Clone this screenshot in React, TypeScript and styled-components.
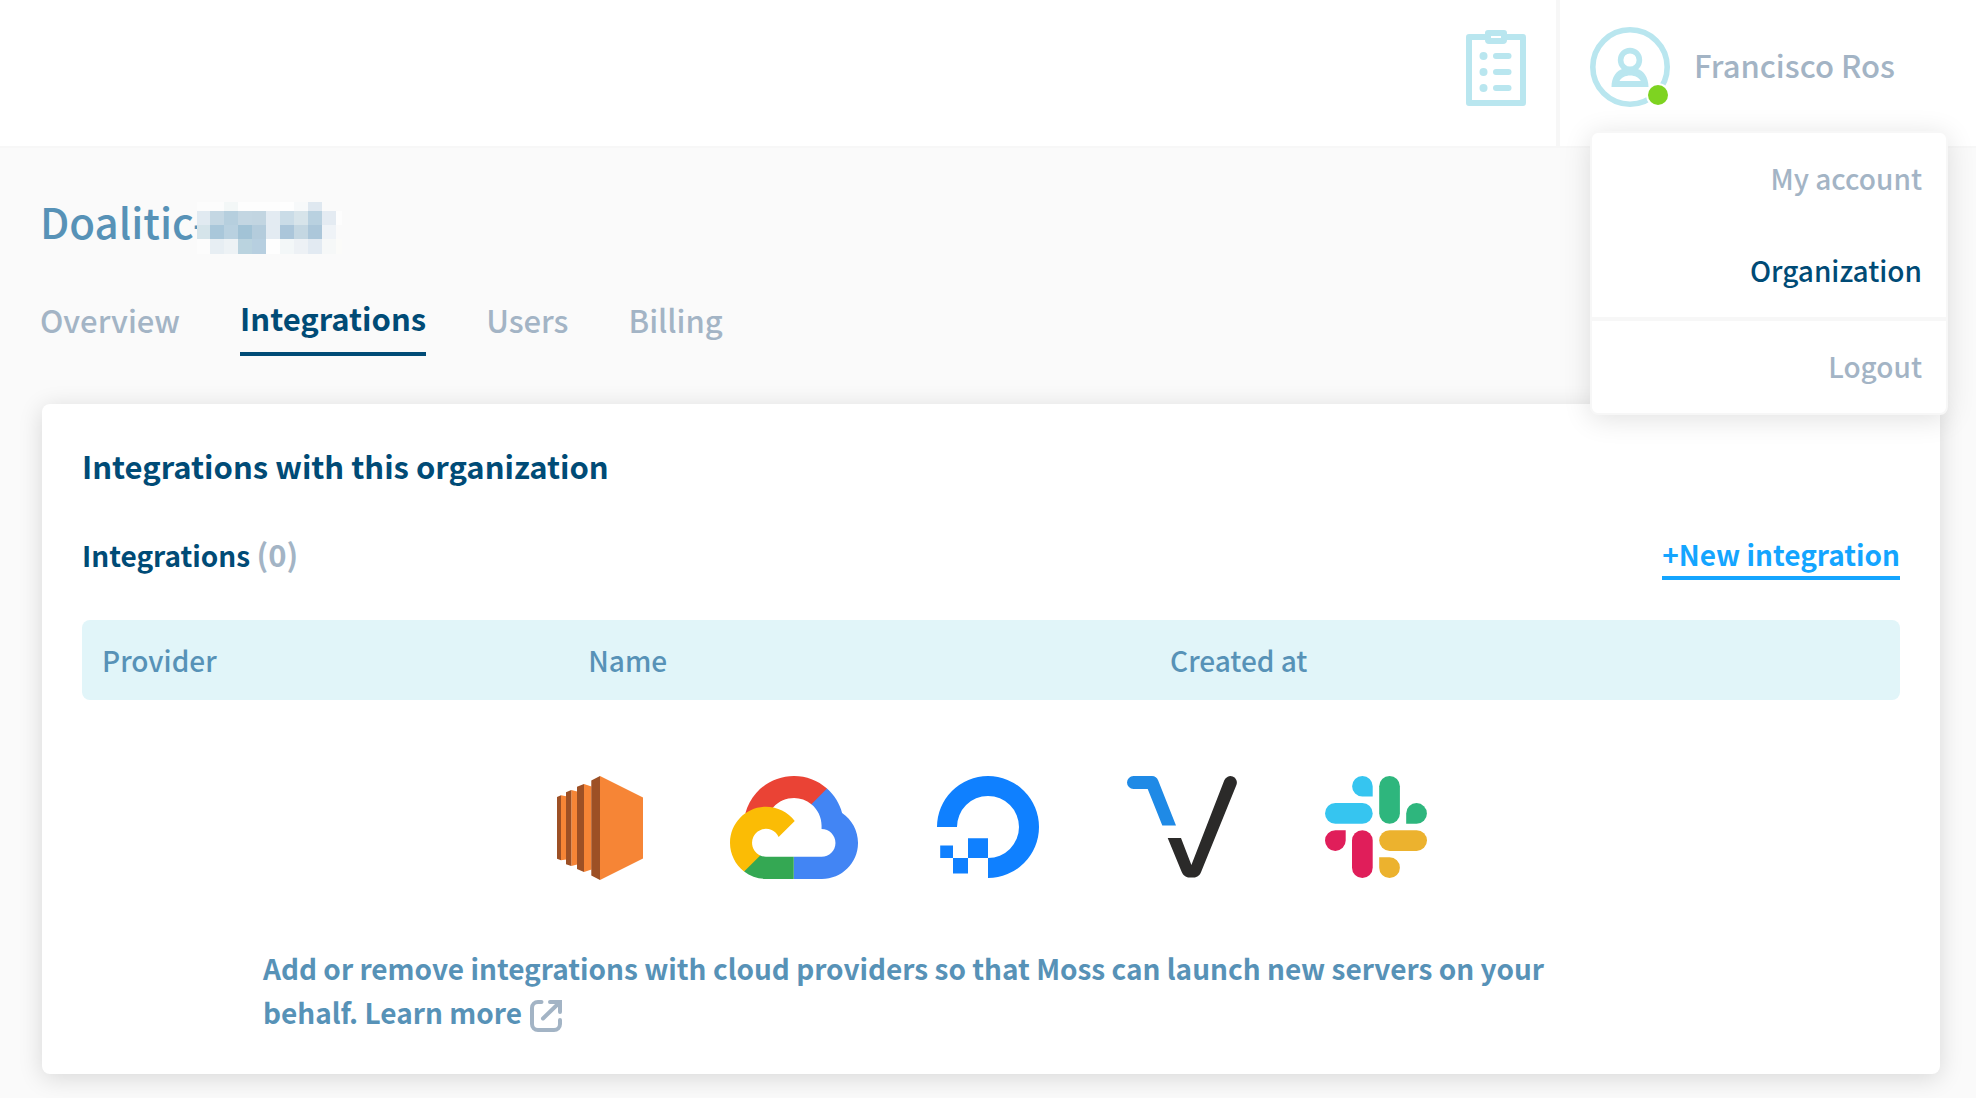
import React from "react";
import styled, { createGlobalStyle, css } from "styled-components";

const color = {
  navy: "#004b76",
  steel: "#5792b7",
  grey: "#a3b4c5",
  link: "#14a5ff",
  ice: "#e1f5f9",
  iconBlue: "#b9e6ef",
  line: "#f7f7f7",
  page: "#fafafa",
};

const size = {
  title: "42px",
  large: "31px",
  base: "28px",
};

const GlobalStyle = createGlobalStyle`
  *, *::before, *::after { box-sizing: border-box; }
  body {
    margin: 0;
    min-height: 100vh;
    background: ${color.page};
    color: ${color.navy};
    font-family: "Noto Sans CJK SC", "Open Sans", sans-serif;
    font-size: ${size.base};
    font-weight: 500;
  }
  a { color: inherit; text-decoration: none; }
  h1, h2, h3, p { margin: 0; }
  svg { display: block; flex: none; }
`;

const Header = styled.header`
  position: relative;
  display: flex;
  justify-content: flex-end;
  height: 148px;
  background: #fff;
  border-bottom: 2px solid ${color.line};
`;

const IconButton = styled.button`
  display: flex;
  align-items: center;
  padding: 0 30px 10px;
  border: 0;
  background: none;
`;

const AccountButton = styled.button`
  display: flex;
  align-items: center;
  gap: 24px;
  width: 420px;
  padding: 0 0 12px 30px;
  border: 0;
  border-left: 4px solid ${color.line};
  background: none;
  color: ${color.grey};
  font-family: inherit;
  font-size: ${size.large};
  font-weight: inherit;
  line-height: 40px;
`;

const AccountName = styled.span`
  padding-bottom: 4px;
`;

const Menu = styled.nav`
  position: absolute;
  z-index: 1;
  top: 131px;
  right: 28px;
  width: 358px;
  border: 2px solid ${color.line};
  border-radius: 8px;
  background: #fff;
  box-shadow: 0 4px 28px rgba(0, 0, 0, 0.12);
`;

const MenuLink = styled.a<{ $active?: boolean; $divided?: boolean }>`
  display: block;
  padding: 0 24px 2px;
  line-height: 90px;
  text-align: right;
  color: ${(p) => (p.$active ? color.navy : color.grey)};
  ${(p) =>
    p.$divided &&
    css`
      border-top: 4px solid ${color.line};
    `}
`;

const Main = styled.main`
  padding: 45px 36px 24px 40px;
`;

const TitleRow = styled.div`
  display: flex;
  align-items: flex-start;
  height: 56px;
  margin-bottom: 49px;
`;

const Title = styled.h1`
  color: ${color.steel};
  font-size: ${size.title};
  font-weight: inherit;
  line-height: 56px;
  white-space: nowrap;
`;

const RedactedWord = styled.svg`
  margin: 9px 0 0 -11px;
`;

const Tabs = styled.nav`
  display: flex;
  align-items: flex-start;
  gap: 60px;
  margin-bottom: 48px;
  font-size: ${size.large};
`;

const Tab = styled.a<{ $active?: boolean }>`
  color: ${color.grey};
  line-height: 44px;
  ${(p) =>
    p.$active &&
    css`
      padding-bottom: 14px;
      border-bottom: 4px solid ${color.navy};
      color: ${color.navy};
      font-weight: 700;
      line-height: 40px;
    `}
`;

const Card = styled.section`
  margin-left: 2px;
  padding: 40px;
  border-radius: 8px;
  background: #fff;
  box-shadow: 0 4px 24px rgba(0, 0, 0, 0.14);
`;

const CardTitle = styled.h2`
  margin-bottom: 44px;
  font-size: ${size.large};
  font-weight: 700;
  line-height: 44px;
`;

const ListHead = styled.div`
  display: flex;
  justify-content: space-between;
  height: 48px;
  margin-bottom: 40px;
`;

const ListTitle = styled.h3`
  font-size: ${size.base};
  font-weight: 700;
  line-height: 44px;
`;

const Count = styled.span`
  color: ${color.grey};
  font-size: ${size.large};
`;

const NewLink = styled.a`
  align-self: flex-end;
  padding-bottom: 4px;
  border-bottom: 4px solid ${color.link};
  color: ${color.link};
  font-weight: 700;
  line-height: 36px;
`;

const Table = styled.table`
  width: 100%;
  table-layout: fixed;
  border-collapse: separate;
  border-spacing: 0;
  border-radius: 8px;
  background: ${color.ice};
`;

const HeadCell = styled.th<{ $width?: string }>`
  width: ${(p) => p.$width || "auto"};
  height: 80px;
  padding: 0 20px;
  color: ${color.steel};
  font-weight: inherit;
  line-height: 40px;
  text-align: left;
`;

const Providers = styled.div`
  display: grid;
  grid-template-columns: repeat(5, 194px);
  justify-content: center;
  justify-items: center;
  padding: 76px 6px 66px 0;
`;

const Note = styled.p`
  max-width: 1512px;
  padding-left: 181px;
  color: ${color.steel};
  font-weight: 700;
  line-height: 44px;
`;

const LearnMore = styled.a`
  svg {
    display: inline-block;
    margin-left: 8px;
    vertical-align: -8px;
  }
`;

const ClipboardIcon = () => (
  <svg width="60" height="76" viewBox="0 0 60 76" fill={color.iconBlue}>
    <path
      fillRule="evenodd"
      d="M3 4H19V3a3 3 0 0 1 3-3H38a3 3 0 0 1 3 3V4H57a3 3 0 0 1 3 3V73a3 3 0 0 1-3 3H3a3 3 0 0 1-3-3V7a3 3 0 0 1 3-3ZM6 10V70H54V10H41a4 4 0 0 1-4 4H23a4 4 0 0 1-4-4ZM25 6V8H35V6Z"
    />
    {[26, 42, 58].map((y) => (
      <g key={y}>
        <circle cx="17.5" cy={y} r="4" />
        <rect x="27" y={y - 3} width="18.5" height="6" rx="3" />
      </g>
    ))}
  </svg>
);

const AvatarIcon = () => (
  <svg width="80" height="80" viewBox="0 0 80 80">
    <g fill="none" stroke={color.iconBlue}>
      <circle cx="40" cy="40" r="37.2" strokeWidth="5.6" />
      <circle cx="40" cy="33" r="9.4" strokeWidth="5.6" />
    </g>
    <path
      fill={color.iconBlue}
      fillRule="evenodd"
      d="M21.5 60C21.5 50 26.5 43.5 33.5 41.5L40 44L46.5 41.5C53.5 43.5 58.5 50 58.5 60ZM29.5 54H50.8C49 50.5 45 48.4 40.2 48.4C35.300 48.4 31.300 50.5 29.5 54Z"
    />
    <circle cx="68" cy="68" r="12" fill="#fff" />
    <circle cx="68" cy="68" r="10" fill="#7ed321" />
  </svg>
);

const AwsLogo = () => (
  <svg width="86" height="104" viewBox="0 0 86 104">
    <path
      fill="#f68536"
      d="M43 0L86 21.5V82.500L43 104ZM27 8L34.500 10.500V93.500L27 96ZM14.300 14L20.200 15.600V88.400L14.300 90ZM4 19.300L9.200 20.200V83.400L4 84.300Z"
    />
    <path
      fill="#9d5025"
      d="M34.300 4.500L43 0V104L34.300 99.500ZM20 10.700L27 8V96L20 93ZM9 16.300L14.300 14V90L9 88.300ZM0 21L4 19.300V84.300L0 82.700Z"
    />
  </svg>
);

const GoogleCloudLogo = () => (
  <svg width="128" height="103" viewBox="0 0 256 206">
    <path
      fill="#ea4335"
      d="M170.25 56.820L192.500 34.570L193.990 25.200C153.440-11.680 88.980-7.500 52.420 33.920C42.270 45.420 34.730 59.760 30.720 74.570L38.690 73.450L83.190 66.110L86.630 62.600C106.420 40.850 139.900 37.930 162.760 56.430Z"
    />
    <path
      fill="#4285f4"
      d="M224.200 73.920C219.090 55.080 208.590 38.150 193.990 25.200L162.760 56.430C175.940 67.200 183.460 83.440 183.130 100.470V106.010C198.490 106.010 210.930 118.450 210.930 133.810C210.930 149.160 198.490 161.290 183.130 161.290H127.460V205.800H183.130C223.060 206.110 255.690 174.300 256 134.370C256.190 110.170 244.250 87.480 224.200 73.920Z"
    />
    <path
      fill="#34a853"
      d="M71.870 205.800H127.460V161.290H71.870C67.910 161.290 64.070 160.440 60.470 158.790L52.580 161.210L30.180 183.460L28.220 191.040C40.790 200.530 56.120 205.860 71.870 205.800Z"
    />
    <path
      fill="#fbbc05"
      d="M71.870 61.430C31.940 61.660-.240 94.230 0 134.160C.130 156.460 10.550 177.450 28.220 191.040L60.470 158.790C46.480 152.470 40.260 136.010 46.580 122.020C52.900 108.030 69.370 101.810 83.360 108.130C89.520 110.910 94.460 115.850 97.250 122.020L129.490 89.770C115.770 71.830 94.450 61.340 71.870 61.430Z"
    />
  </svg>
);

const DigitalOceanLogo = () => (
  <svg width="102" height="102" viewBox="0 0 102 102" fill="#0f80ff">
    <path d="M0 51A51 51 0 1 1 51 102V82A31 31 0 1 0 20 51Z" />
    <path d="M31 62.300H51V82H31ZM16 82H31V97.500H16ZM3.200 69.500H16V82H3.200Z" />
  </svg>
);

const VultrLogo = () => (
  <svg width="110" height="102" viewBox="0 0 110 102">
    <path
      fill="#1f8ae6"
      d="M6.500 0H25C28 0 30 1.500 31.200 4.500L49 49.500H35.300L20.700 13H6.500A6.500 6.500 0 0 1 6.500 0Z"
    />
    <path
      fill="#2b2a29"
      d="M40.700 62H54L64.400 89L97.300 4.200A6.500 6.500 0 0 1 109.400 9L74.300 95.500C73 99 70.500 101.500 66.500 101.500H62.500C58.500 101.500 56 99 54.500 95.500Z"
    />
  </svg>
);

const SlackLogo = () => (
  <svg width="102" height="102" viewBox="0 0 102 102">
    <g fill="#36c5f0">
      <path d="M47.700 20.600H37.400A10.300 10.300 0 1 1 47.700 10.300Z" />
      <rect x="0" y="27" width="47.700" height="20.800" rx="10.400" />
    </g>
    <g fill="#2eb67d">
      <rect x="54.200" y="0" width="20.700" height="47.800" rx="10.350" />
      <path d="M81.200 47.800V37.400A10.350 10.350 0 1 1 91.600 47.800Z" />
    </g>
    <g fill="#e01e5a">
      <path d="M20.700 54.200V64.500A10.350 10.350 0 1 1 10.350 54.200Z" />
      <rect x="27" y="54.200" width="20.700" height="47.800" rx="10.350" />
    </g>
    <g fill="#ecb22e">
      <rect x="54.200" y="54.200" width="47.800" height="20.700" rx="10.350" />
      <path d="M54.200 81.300H64.500A10.350 10.350 0 1 1 54.200 91.600Z" />
    </g>
  </svg>
);

const ExternalIcon = () => (
  <svg
    width="32"
    height="32"
    viewBox="0 0 32 32"
    fill="none"
    stroke={color.grey}
    strokeWidth="4"
    strokeLinecap="round"
  >
    <path d="M11.500 2H8A6 6 0 0 0 2 8V24A6 6 0 0 0 8 30H24A6 6 0 0 0 30 24V20" />
    <path d="M20 2H30V12M29 3L13 18.500" />
  </svg>
);

const mosaicX = [0, 13, 27, 41, 55, 69, 83, 97, 111, 125, 139];
const mosaicY = [0, 9, 23, 37];
const mosaic = [
  "#fcfcfc #fcfcfc #f3f7f7 #fdfdfd #fdfdfd #fdfdfd #fefefe #f7f9fa #dfe8f0 #fafafa #fafafa",
  "#e1eaf1 #c4d7e3 #b6cfde #c3d6e2 #c2d5e1 #e3ebf2 #cadce7 #d7e4ea #b9d1e0 #e4ebf2 #fdfdfd",
  "#d5e4ea #a9c7da #b9d1e0 #a2c3d6 #b4ccdc #e3ebf2 #abc6da #c4d7e2 #acc7da #eff3f7 #fafafa",
  "#fcfcfc #e7eef3 #edf2f5 #bad3df #b7cfe0 #fefefe #f3f7f8 #edf1f5 #e2eaf2 #f6f8f8 #fbfbf9",
].map((row) => row.split(" "));

const HiddenName = () => (
  <RedactedWord width="145" height="52" viewBox="0 0 145 52" shapeRendering="crispEdges">
    {mosaic.map((row, r) =>
      row.map((fill, c) => (
        <rect
          key={`${r}-${c}`}
          x={mosaicX[c]}
          y={mosaicY[r]}
          width={(mosaicX[c + 1] ?? 145) - mosaicX[c]}
          height={(mosaicY[r + 1] ?? 52) - mosaicY[r]}
          fill={fill}
        />
      ))
    )}
  </RedactedWord>
);

export default function App() {
  return (
    <>
      <GlobalStyle />
      <Header>
        <IconButton type="button" aria-label="Tasks">
          <ClipboardIcon />
        </IconButton>
        <AccountButton type="button" aria-haspopup="menu" aria-expanded="true">
          <AvatarIcon />
          <AccountName>Francisco Ros</AccountName>
        </AccountButton>
        <Menu aria-label="Account">
          <MenuLink href="#account">My account</MenuLink>
          <MenuLink href="#organization" $active>
            Organization
          </MenuLink>
          <MenuLink href="#logout" $divided>
            Logout
          </MenuLink>
        </Menu>
      </Header>
      <Main>
        <TitleRow>
          <Title>Doalitic-</Title>
          <HiddenName />
        </TitleRow>
        <Tabs aria-label="Organization">
          <Tab href="#overview">Overview</Tab>
          <Tab href="#integrations" $active aria-current="page">
            Integrations
          </Tab>
          <Tab href="#users">Users</Tab>
          <Tab href="#billing">Billing</Tab>
        </Tabs>
        <Card>
          <CardTitle>Integrations with this organization</CardTitle>
          <ListHead>
            <ListTitle>
              Integrations <Count>(0)</Count>
            </ListTitle>
            <NewLink href="#new">+New integration</NewLink>
          </ListHead>
          <Table>
            <thead>
              <tr>
                <HeadCell scope="col" $width="26.75%">
                  Provider
                </HeadCell>
                <HeadCell scope="col" $width="32%">
                  Name
                </HeadCell>
                <HeadCell scope="col">Created at</HeadCell>
              </tr>
            </thead>
          </Table>
          <Providers>
            <AwsLogo />
            <GoogleCloudLogo />
            <DigitalOceanLogo />
            <VultrLogo />
            <SlackLogo />
          </Providers>
          <Note>
            Add or remove integrations with cloud providers so that Moss can launch new servers on
            your behalf.{" "}
            <LearnMore href="#learn-more">
              Learn more
              <ExternalIcon />
            </LearnMore>
          </Note>
        </Card>
      </Main>
    </>
  );
}
